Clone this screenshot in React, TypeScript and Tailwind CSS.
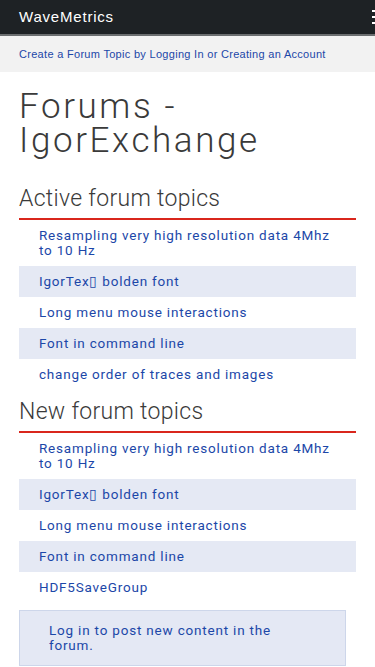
import React from 'react'

const active = [
    'Resampling very high resolution data 4Mhz to 10 Hz',
    'IgorTex\u25AF bolden font',
    'Long menu mouse interactions',
    'Font in command line',
    'change order of traces and images',
]

const fresh = [
    'Resampling very high resolution data 4Mhz to 10 Hz',
    'IgorTex\u25AF bolden font',
    'Long menu mouse interactions',
    'Font in command line',
    'HDF5SaveGroup',
]

function TopicList({ title, items }: { title: string; items: string[] }) {
    return (
        <section>
            <h2 className="text-[23px] leading-[28px] font-light text-[#3a3a3a] tracking-[0.3px] pb-[5px] border-b-2 border-[#d9261c]">
                {title}
            </h2>
            <ul>
                {items.map((t, i) => (
                    <li
                        key={i}
                        className={`pl-[20px] pr-[16px] py-[8px] text-[13.5px] leading-[15px] text-[#1c47a8] tracking-[0.8px] ${i % 2 === 1 ? 'bg-[#e5e9f4]' : ''}`}
                    >
                        <a href="#">{t}</a>
                    </li>
                ))}
            </ul>
        </section>
    )
}

export default function App() {
    return (
        <div className="w-[375px] min-h-[667px] bg-white overflow-hidden" style={{ fontFamily: 'Roboto, "Liberation Sans", sans-serif' }}>
            {/* Top bar */}
            <header className="h-[36px] bg-[#1e2225] border-b-2 border-[#6b6e70] flex items-center justify-between">
                <span className="pl-[19px] text-white text-[15px] tracking-[0.8px]" style={{ fontFamily: '"Liberation Sans", sans-serif' }}>WaveMetrics</span>
                <span className="flex flex-col gap-[4px] mr-[-7px]">
                    <span className="block w-[10px] h-[2px] bg-white" />
                    <span className="block w-[10px] h-[2px] bg-white" />
                    <span className="block w-[10px] h-[2px] bg-white" />
                </span>
            </header>

            {/* Login notice */}
            <div className="h-[36px] bg-[#f2f2f2] flex items-center px-[19px]">
                <a href="#" className="text-[11px] text-[#1c47a8] tracking-[0.3px]" style={{ fontFamily: '"Liberation Sans", sans-serif' }}>
                    Create a Forum Topic by Logging In or Creating an Account
                </a>
            </div>

            <main className="px-[19px] pt-[18px]">
                <h1 className="text-[35px] leading-[34px] font-light text-[#3a3a3a] tracking-[2.6px]">Forums - IgorExchange</h1>

                <div className="mt-[27px]">
                    <TopicList title="Active forum topics" items={active} />
                </div>
                <div className="mt-[8px]">
                    <TopicList title="New forum topics" items={fresh} />
                </div>

                <div className="mt-[7px] mr-[10px] bg-[#e4e8f4] border border-[#cdd6ea] pl-[29px] pr-[40px] py-[12px] text-[13.5px] leading-[15px] text-[#1c47a8] tracking-[0.8px]">
                    Log in to post new content in the forum.
                </div>
            </main>
        </div>
    )
}
